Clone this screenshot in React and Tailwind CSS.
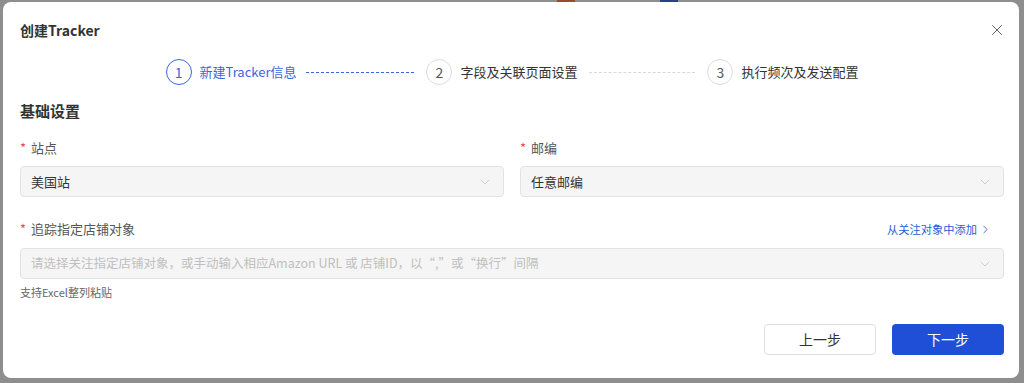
import { X, ChevronDown, ChevronRight } from 'lucide-react';

function Step({ n, label, active }) {
  return (
    <div className="flex items-center gap-[8px]">
      <div
        className={`w-[26px] h-[26px] rounded-full border flex items-center justify-center text-[14px] ${
          active ? 'border-[#3a66e0] text-[#3a66e0]' : 'border-[#dcdcdc] text-[#555]'
        }`}
      >
        {n}
      </div>
      <span className={`text-[13px] ${active ? 'text-[#3a66e0]' : 'text-[#333]'}`}>{label}</span>
    </div>
  );
}

function Select({ value, placeholder }) {
  return (
    <div className="h-[31px] rounded-[4px] border border-[#e3e3e3] bg-[#f5f5f5] flex items-center justify-between pl-[10px] pr-[10px]">
      {value ? (
        <span className="text-[13px] text-[#333]">{value}</span>
      ) : (
        <span className="text-[12.5px] text-[#c0c0c0]">{placeholder}</span>
      )}
      <ChevronDown size={16} strokeWidth={1.2} className="text-[#c4c4c4]" />
    </div>
  );
}

function Label({ children }) {
  return (
    <div className="flex items-center gap-[5px] text-[13px] text-[#555] h-[20px]">
      <span className="text-[#f04b4b] text-[13px]">*</span>
      {children}
    </div>
  );
}

export default function App() {
  return (
    <div
      className="w-[1024px] h-[383px] bg-[#8e8e8e] overflow-hidden"
      style={{ fontFamily: '"Noto Sans CJK SC", "Noto Sans", sans-serif' }}
    >
      {/* bits of the page behind the overlay */}
      <div className="h-[2px] flex">
        <div className="w-[557px]" />
        <div className="w-[18px] bg-[#9a4a2a]" />
        <div className="w-[85px]" />
        <div className="w-[18px] bg-[#2a3f8a]" />
      </div>

      <div className="ml-[3px] w-[1016px] h-[376px] bg-white rounded-[8px] pl-[17px] pr-[15px] flex flex-col">
        <div className="flex items-center justify-between h-[28px] mt-[14px]">
          <h1 className="text-[14px] font-bold text-[#333]">创建Tracker</h1>
          <X size={18} strokeWidth={1.2} className="text-[#555] mr-[-2px]" />
        </div>

        <div className="flex items-center justify-center mt-[14px] h-[28px]">
          <Step n="1" label="新建Tracker信息" active />
          <div className="w-[108px] ml-[10px] mr-[12px] border-t border-dashed border-[#3a66e0]" />
          <Step n="2" label="字段及关联页面设置" />
          <div className="w-[106px] ml-[12px] mr-[12px] border-t border-dashed border-[#d9d9d9]" />
          <Step n="3" label="执行频次及发送配置" />
        </div>

        <h2 className="mt-[14px] text-[15px] font-bold text-[#333] h-[22px] leading-[22px]">基础设置</h2>

        <div className="grid grid-cols-2 gap-[16px] mt-[16px]">
          <div className="flex flex-col gap-[8px]">
            <Label>站点</Label>
            <Select value="美国站" />
          </div>
          <div className="flex flex-col gap-[8px]">
            <Label>邮编</Label>
            <Select value="任意邮编" />
          </div>
        </div>

        <div className="flex items-center justify-between mt-[22px]">
          <Label>追踪指定店铺对象</Label>
          <div className="flex items-center gap-[2px] text-[11.25px] text-[#2c5ad6] mr-[12px]">
            从关注对象中添加
            <ChevronRight size={13} strokeWidth={1.6} />
          </div>
        </div>
        <div className="mt-[9px]">
          <Select placeholder="请选择关注指定店铺对象，或手动输入相应Amazon URL 或 店铺ID，以“,”或“换行”间隔" />
        </div>
        <div className="mt-[5px] text-[11px] text-[#666] h-[16px] leading-[16px]">支持Excel整列粘贴</div>

        <div className="flex justify-end gap-[16px] mt-[24px]">
          <button className="w-[112px] h-[31px] rounded-[4px] border border-[#dedede] bg-white text-[14px] text-[#333]">
            上一步
          </button>
          <button className="w-[112px] h-[31px] rounded-[4px] bg-[#1f4fd6] text-[14px] text-white">
            下一步
          </button>
        </div>
      </div>
    </div>
  );
}
